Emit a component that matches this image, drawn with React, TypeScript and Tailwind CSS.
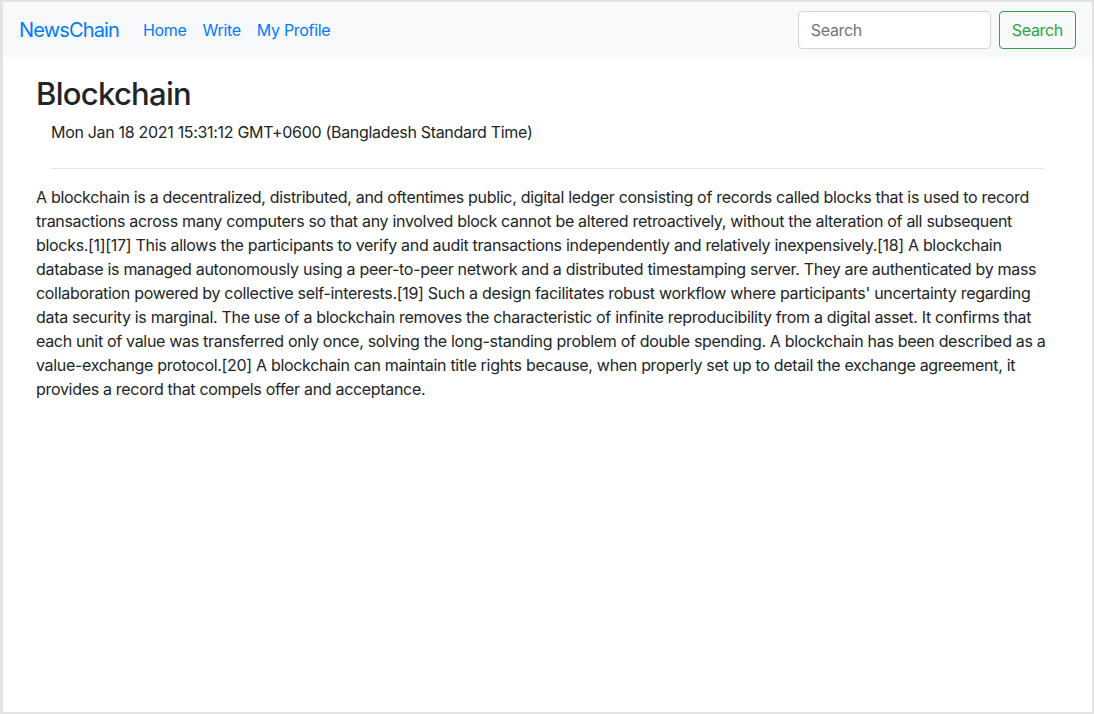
const body =
  "A blockchain is a decentralized, distributed, and oftentimes public, digital ledger consisting of records called blocks that is used to record transactions across many computers so that any involved block cannot be altered retroactively, without the alteration of all subsequent blocks.[1][17] This allows the participants to verify and audit transactions independently and relatively inexpensively.[18] A blockchain database is managed autonomously using a peer-to-peer network and a distributed timestamping server. They are authenticated by mass collaboration powered by collective self-interests.[19] Such a design facilitates robust workflow where participants' uncertainty regarding data security is marginal. The use of a blockchain removes the characteristic of infinite reproducibility from a digital asset. It confirms that each unit of value was transferred only once, solving the long-standing problem of double spending. A blockchain has been described as a value-exchange protocol.[20] A blockchain can maintain title rights because, when properly set up to detail the exchange agreement, it provides a record that compels offer and acceptance.";

export default function App() {
  return (
    <div
      className="h-[714px] w-[1094px] overflow-hidden border-t-2 border-r-2 border-b-2 border-l-[3px] border-[#e3e3e3] bg-white text-[#212529] tracking-[-0.31px]"
      style={{ fontFamily: "Inter, 'Noto Sans', sans-serif" }}
    >
      <nav className="flex h-[55px] items-center justify-between bg-[#f8f9fa] px-4">
        <div className="flex items-center">
          <a href="#" className="mr-4 text-[20px] leading-[30px] tracking-[-0.85px] text-[#007bff]">
            NewsChain
          </a>
          <a href="#" className="px-2 text-[16px] text-[#007bff]">Home</a>
          <a href="#" className="px-2 text-[16px] text-[#007bff]">Write</a>
          <a href="#" className="px-2 text-[16px] text-[#007bff]">My Profile</a>
        </div>
        <form className="flex items-center" onSubmit={(e) => e.preventDefault()}>
          <input
            type="search"
            placeholder="Search"
            className="mr-2 h-[38px] w-[193px] rounded-[4px] border border-[#ced4da] bg-white px-3 text-[16px] text-[#495057] placeholder:text-[#6c757d] outline-none"
          />
          <button
            type="submit"
            className="h-[38px] rounded-[4px] border border-[#28a745] px-3 text-[16px] text-[#28a745]"
          >
            Search
          </button>
        </form>
      </nav>

      <div className="w-[1041px] pl-[33px] pt-[18px]">
        <h2 className="text-[31px] font-medium leading-[38px] tracking-[-0.7px]">Blockchain</h2>
        <p className="mt-[7px] pl-[15px] text-[16px] leading-6">
          Mon Jan 18 2021 15:31:12 GMT+0600 (Bangladesh Standard Time)
        </p>
        <hr className="mt-[24px] ml-[15px] border-t border-[rgba(0,0,0,0.1)]" />
        <p className="mt-4 mr-[-6px] text-[16px] leading-6">{body}</p>
      </div>
    </div>
  );
}
